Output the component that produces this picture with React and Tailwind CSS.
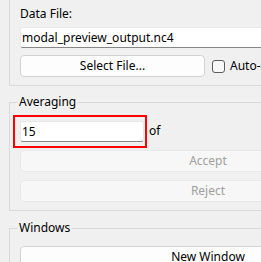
import React from "react";

export default function App() {
  return (
    <div className="w-[261px] h-[262px] overflow-hidden bg-[#f0f0f0] text-[12px] text-black font-['Segoe_UI','Noto_Sans',sans-serif]">
      <div className="w-[420px] pl-[9px]">
        {/* DATA FILE GROUP (top edge is off screen) */}
        <div className="w-[398px] border-x border-b border-[#d9d9d9] pl-[10px] pr-[10px] pt-[6px] pb-[8px]">
          <div className="leading-[16px]">Data File:</div>
          <input
            readOnly
            value="modal_preview_output.nc4"
            className="mt-[5px] block w-full h-[21px] bg-white border border-[#e8e8e8] border-b-[#868686] rounded-[3px] px-[1px] leading-[19px] outline-none"
          />
          <div className="mt-[7px] flex items-center">
            <button className="w-[185px] h-[22px] rounded-[4px] border border-[#d3d3d3] bg-[#fdfdfd]">
              Select File...
            </button>
            <label className="ml-[7px] flex items-center">
              <span className="w-[13px] h-[13px] rounded-[3px] border border-[#5c5c5c] bg-[#f8f8f8]" />
              <span className="ml-[5px]">Auto-refresh</span>
            </label>
          </div>
        </div>

        {/* AVERAGING */}
        <fieldset className="mt-[8px] w-[398px] border border-[#d9d9d9] px-0 pt-[10px] pb-[8px]">
          <legend className="ml-[7px] px-[2px] leading-[16px]">Averaging</legend>
          <div className="px-[10px]">
            <div className="relative flex items-center h-[22px]">
              <input
                readOnly
                value="15"
                className="w-[124px] h-[21px] bg-white border border-[#e8e8e8] border-b-[#868686] rounded-[3px] px-[1px] leading-[19px] outline-none"
              />
              <span className="ml-[5px]">of</span>
              {/* highlight box */}
              <div className="absolute left-[-7px] top-[-5px] w-[134px] h-[33px] border-2 border-[#ff0000]" />
            </div>
            <button
              disabled
              className="mt-[8px] block w-full h-[22px] rounded-[4px] border border-[#e9e9e9] bg-[#f7f7f7] text-[#a0a0a0]"
            >
              Accept
            </button>
            <button
              disabled
              className="mt-[8px] block w-full h-[22px] rounded-[4px] border border-[#e9e9e9] bg-[#f7f7f7] text-[#a0a0a0]"
            >
              Reject
            </button>
          </div>
        </fieldset>

        {/* WINDOWS */}
        <fieldset className="mt-[9px] w-[398px] border border-[#d9d9d9] px-0 pt-[10px] pb-[8px]">
          <legend className="ml-[7px] px-[2px] leading-[16px]">Windows</legend>
          <div className="px-[10px]">
            <button className="block w-full h-[22px] rounded-[4px] border border-[#d3d3d3] bg-[#fdfdfd]">
              New Window
            </button>
          </div>
        </fieldset>
      </div>
    </div>
  );
}
